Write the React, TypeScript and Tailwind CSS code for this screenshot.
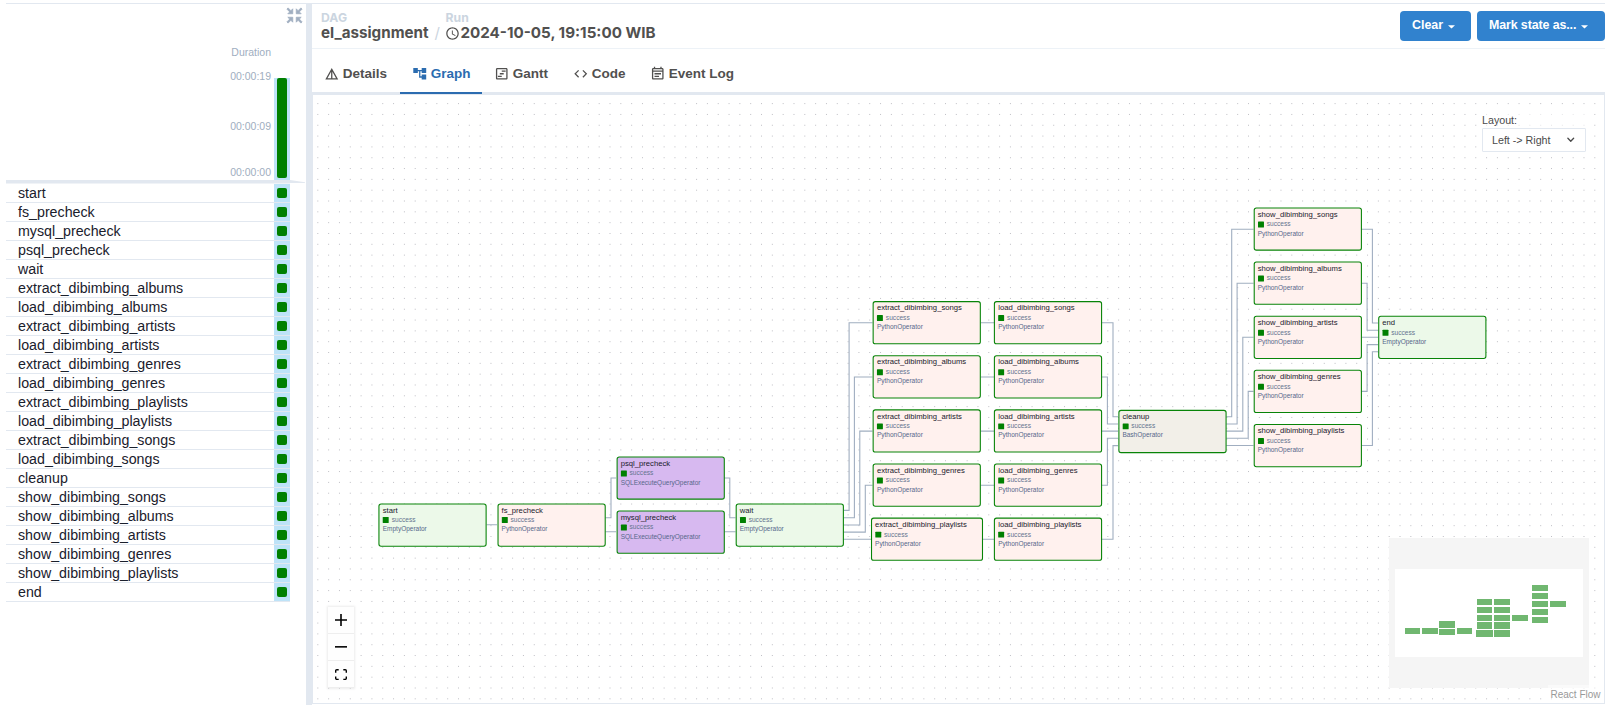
import React from "react";
import {
  MdDetails,
  MdAccountTree,
  MdOutlineViewTimeline,
  MdCode,
  MdOutlineEventNote,
  MdOutlineSchedule,
} from "react-icons/md";
import { BiCollapse } from "react-icons/bi";
import { FiChevronDown } from "react-icons/fi";

const tasks = [
  "start",
  "fs_precheck",
  "mysql_precheck",
  "psql_precheck",
  "wait",
  "extract_dibimbing_albums",
  "load_dibimbing_albums",
  "extract_dibimbing_artists",
  "load_dibimbing_artists",
  "extract_dibimbing_genres",
  "load_dibimbing_genres",
  "extract_dibimbing_playlists",
  "load_dibimbing_playlists",
  "extract_dibimbing_songs",
  "load_dibimbing_songs",
  "cleanup",
  "show_dibimbing_songs",
  "show_dibimbing_albums",
  "show_dibimbing_artists",
  "show_dibimbing_genres",
  "show_dibimbing_playlists",
  "end",
];

type TaskNode = { id: string; op: string; x: number; y: number; w?: number };

const kinds = ["songs", "albums", "artists", "genres", "playlists"];

// Positions are in flow units; the layer that holds them is scaled.
const nodes: TaskNode[] = [
  { id: "start", op: "EmptyOperator", x: 0, y: 546.5 },
  { id: "fs_precheck", op: "PythonOperator", x: 219.5, y: 546.5 },
  { id: "psql_precheck", op: "SQLExecuteQueryOperator", x: 439.5, y: 460 },
  { id: "mysql_precheck", op: "SQLExecuteQueryOperator", x: 439.5, y: 560 },
  { id: "wait", op: "EmptyOperator", x: 659.5, y: 546.5 },
  ...kinds.map((k, i) => ({
    id: `extract_dibimbing_${k}`,
    op: "PythonOperator",
    x: k === "playlists" ? 909.5 : 913,
    y: 173 + i * 100,
    w: k === "playlists" ? 207 : 200,
  })),
  ...kinds.map((k, i) => ({ id: `load_dibimbing_${k}`, op: "PythonOperator", x: 1137, y: 173 + i * 100 })),
  { id: "cleanup", op: "BashOperator", x: 1366.5, y: 373.5 },
  ...kinds.map((k, i) => ({ id: `show_dibimbing_${k}`, op: "PythonOperator", x: 1616.5, y: i * 100 })),
  { id: "end", op: "EmptyOperator", x: 1846.5, y: 200 },
];

const opColor: Record<string, string> = {
  EmptyOperator: "bg-[#ecf9e9]",
  PythonOperator: "bg-[#fff1ee]",
  SQLExecuteQueryOperator: "bg-[#d7b9f0]",
  BashOperator: "bg-[#f2efe8]",
};

const edges = [
  "M486.6 524.7H497",
  "M605.3 517.7H611V478H616",
  "M605.3 531.8H616",
  "M724.5 478H729.8V517.7H735.5",
  "M724.5 531.8H735.5",
  "M843.7 510.4H849.1V322.7H872.5",
  "M843.7 517.7H854.4V377H872.5",
  "M843.7 525H859.8V431.1H872.5",
  "M843.7 532.1H865.3V485.2H872.5",
  "M843.7 539.3H871",
  "M980.7 322.7H994",
  "M980.7 377H994",
  "M980.7 431.1H994",
  "M980.7 485.2H994",
  "M982.7 539.3H994",
  "M1102 322.7H1113V416.7H1118",
  "M1102 377H1107.4V424H1118",
  "M1102 431.1H1118",
  "M1102 485.2H1107.4V438.3H1118",
  "M1102 539.3H1113V445.6H1118",
  "M1226.3 416.7H1231.7V229.2H1253.5",
  "M1226.3 424H1237.1V283.3H1253.5",
  "M1226.3 431.1H1242.8V337.3H1253.5",
  "M1226.3 438.3H1248.2V391.4H1253.5",
  "M1226.3 445.5H1253.5",
  "M1361.7 229.2H1372.4V323H1378",
  "M1361.7 283.3H1367.1V330.2H1378",
  "M1361.7 337.3H1378",
  "M1361.7 391.4H1367.1V344.6H1378",
  "M1361.7 445.5H1372.4V351.8H1378",
];

const miniNodes = [
  [16, 90, 15, 6],
  [33, 90, 16, 6],
  [50, 83, 16, 7],
  [50, 91, 16, 6],
  [68, 90, 15, 6],
  [88, 61, 15, 6],
  [88, 69, 15, 6],
  [88, 77, 15, 6],
  [88, 84, 15, 7],
  [87, 92, 17, 7],
  [105, 61, 16, 6],
  [105, 69, 16, 6],
  [105, 77, 16, 6],
  [105, 84, 16, 7],
  [105, 92, 16, 7],
  [123, 77, 16, 6],
  [143, 47, 16, 6],
  [143, 55, 16, 6],
  [143, 63, 16, 6],
  [143, 71, 16, 6],
  [143, 79, 16, 6],
  [161, 63, 16, 6],
];

function GridPanel() {
  return (
    <aside className="w-[300px] shrink-0 bg-white">
      <div className="relative flex h-[176px] w-[284px] justify-end">
        <BiCollapse
          className="absolute -right-[15px] top-[1px] size-[21px] text-[#a0aec0]"
          stroke="currentColor"
          strokeWidth={0.9}
        />
        <div className="flex w-[60px] flex-col items-end pr-[3px] pt-[42px] text-[10.5px] leading-[13px] text-[#a0aec0]">
          <span>Duration</span>
          <span className="mt-[11px]">00:00:19</span>
          <span className="mt-[37px]">00:00:09</span>
          <span className="mt-[33px]">00:00:00</span>
        </div>
        <div className="mt-[74px] flex h-[102px] w-4 flex-col items-center bg-[#bee3f8]">
          <div className="h-[100px] w-[10px] rounded-[2px] bg-[#008000]" />
        </div>
      </div>
      <svg className="block" width="300" height="4" viewBox="0 0 300 4">
        <path d="M0 0H284L299 2.2V3H284V3.5H0Z" fill="#e2e8f0" />
      </svg>
      <ul className="w-[284px]">
        {tasks.map((t) => (
          <li key={t} className="flex h-[19px] border-b border-[#e2e8f0]">
            <span className="flex-1 pl-3 text-[14.22px] leading-[18px] text-[#1a202c]">{t}</span>
            <span className="flex w-4 items-center justify-center bg-[#bee3f8]">
              <span className="size-[10px] rounded-[2px] bg-[#008000]" />
            </span>
          </li>
        ))}
      </ul>
    </aside>
  );
}

function Caret() {
  return (
    <svg width="7" height="4" viewBox="0 0 7 4" className="mt-[3px]">
      <path d="M0 0.3H7L3.5 3.5Z" fill="#fff" />
    </svg>
  );
}

function Header() {
  return (
    <header className="flex h-[45px] justify-between border-b border-[#edf2f7]">
      <div className="flex pl-[9px] pt-[6px] font-['Inter',sans-serif] font-bold text-[#51504f]">
        <div>
          <div className="text-[12.2px] leading-[15px] text-[#cbd5e0]">DAG</div>
          <div className="text-[15.2px] leading-[16px]">el_assignment</div>
        </div>
        <div className="w-[17px] pt-[15px] text-center text-[15px] font-normal leading-4 text-[#cbd5e0]">/</div>
        <div>
          <div className="text-[12.2px] leading-[15px] text-[#cbd5e0]">Run</div>
          <div className="flex items-center text-[15.2px] leading-[16px]">
            <MdOutlineSchedule className="-ml-px mr-[0.8px] mt-px size-[15px]" />
            2024-10-05, 19:15:00 WIB
          </div>
        </div>
      </div>
      <div className="mt-[7px] flex h-[30px] gap-[6px] text-[12.4px] font-bold text-white">
        <button className="flex w-[71px] items-center gap-[4.5px] rounded-[4px] bg-[#3182ce] pb-[2px] pl-3">
          Clear <Caret />
        </button>
        <button className="flex w-[128px] items-center gap-[5px] rounded-[4px] bg-[#3182ce] pb-[2px] pl-3 tracking-[-0.1px]">
          Mark state as... <Caret />
        </button>
      </div>
    </header>
  );
}

const tabs = [
  { label: "Details", Icon: MdDetails, cls: "w-[88px] text-[#51504f] border-[#e2e8f0]" },
  { label: "Graph", Icon: MdAccountTree, cls: "w-[82px] text-[#2b6cb0] border-[#2b6cb0]" },
  { label: "Gantt", Icon: MdOutlineViewTimeline, cls: "w-[79px] text-[#51504f] border-[#e2e8f0]" },
  { label: "Code", Icon: MdCode, cls: "w-[77px] text-[#51504f] border-[#e2e8f0]" },
  { label: "Event Log", Icon: MdOutlineEventNote, cls: "w-[108px] text-[#51504f] border-[#e2e8f0]" },
];

function Tabs() {
  return (
    <nav className="flex h-[46px] border-b border-[#e2e8f0]">
      {tabs.map(({ label, Icon, cls }) => (
        <div
          key={label}
          className={`flex h-[45px] items-center gap-[3.8px] border-b-2 pl-[11.5px] pt-[7px] text-[13.5px] font-bold ${cls}`}
        >
          <Icon className="size-[15.5px] shrink-0" />
          <span className="whitespace-nowrap">{label}</span>
        </div>
      ))}
      <div className="h-[45px] flex-1 border-b-2 border-[#e2e8f0]" />
    </nav>
  );
}

function Node({ node }: { node: TaskNode }) {
  return (
    <div
      className={`absolute h-[80px] rounded-[5px] border-2 border-[#088408] px-[6px] ${opColor[node.op]}`}
      style={{ left: node.x, top: node.y, width: node.w ?? 200 }}
    >
      <div className="whitespace-nowrap text-[14.2px] leading-[20px] text-[#1a202c]">{node.id}</div>
      <div className="mt-[1.5px] flex items-center text-[12.2px] leading-[15px] text-[#64748f]">
        <span className="mr-[5.5px] size-[11px] rounded-[1px] bg-[#008000]" />
        success
      </div>
      <div className="whitespace-nowrap text-[12px] leading-[18px] text-[#56678a]">{node.op}</div>
    </div>
  );
}

function Graph() {
  return (
    <section className="relative h-[609px] overflow-hidden border-x border-b border-[#e2e8f0]">
      <svg className="absolute inset-0" width="1291" height="608" viewBox="313 95 1291 608">
        <defs>
          <pattern id="dots" x="312.4" y="98.2" width="10.822" height="10.822" patternUnits="userSpaceOnUse">
            <circle cx="5.41" cy="5.41" r="0.54" fill="#b0b0b8" />
          </pattern>
        </defs>
        <rect x="313" y="95" width="1291" height="608" fill="url(#dots)" />
        <path d={edges.join("")} fill="none" stroke="#a0aec0" strokeWidth="1.1" />
      </svg>
      <div className="absolute left-[65px] top-[112px] origin-top-left translate-x-[0.4px] translate-y-[0.4px] scale-[0.5413]">
        {nodes.map((n) => (
          <Node key={n.id} node={n} />
        ))}
      </div>

      <div className="absolute right-[15px] top-[17px] w-[110px] bg-white/60 pl-[3px] text-[10.7px] text-[#4a4a4a]">
        <div className="leading-4">Layout:</div>
        <div className="flex h-6 w-[104px] items-center justify-between rounded-[1px] border border-[#e2e8f0] bg-white pl-[9px] pr-[9px]">
          Left -&gt; Right
          <FiChevronDown className="size-[11.5px]" strokeWidth={2.8} />
        </div>
      </div>

      <div className="absolute bottom-[15px] left-[15px] flex flex-col shadow-[0_0_2px_1px_rgba(0,0,0,0.08)]">
        <button className="flex h-[27px] w-[26px] items-center justify-center border-b border-[#eee] bg-[#fefefe]">
          <svg width="12" height="12" viewBox="0 0 32 32">
            <path d="M32 18.133H18.133V32h-4.266V18.133H0v-4.266h13.867V0h4.266v13.867H32z" />
          </svg>
        </button>
        <button className="flex h-[27px] w-[26px] items-center justify-center border-b border-[#eee] bg-[#fefefe]">
          <svg width="12" height="2" viewBox="0 0 32 5">
            <path d="M0 0h32v4.2H0z" />
          </svg>
        </button>
        <button className="flex h-[27px] w-[26px] items-center justify-center border-b border-[#eee] bg-[#fefefe] pt-px">
          <svg width="12" height="11.25" viewBox="0 0 32 30">
            <path d="M3.692 4.63c0-.53.4-.938.939-.938h5.215V0H4.708C2.13 0 0 2.054 0 4.63v5.216h3.692V4.631zM27.354 0h-5.2v3.692h5.17c.53 0 .984.4.984.939v5.215H32V4.631A4.624 4.624 0 0027.354 0zm.954 24.83c0 .532-.4.94-.939.94h-5.215v3.768h5.215c2.577 0 4.631-2.13 4.631-4.707v-5.139h-3.692v5.139zm-23.677.94c-.531 0-.939-.4-.939-.94v-5.138H0v5.139c0 2.577 2.13 4.707 4.708 4.707h5.138V25.77H4.631z" />
          </svg>
        </button>
      </div>

      <svg className="absolute bottom-[15px] right-[15px]" width="200" height="150" viewBox="0 0 200 150">
        <rect width="200" height="150" fill="#f5f5f5" />
        <rect x="6" y="31" width="188" height="88" fill="#fff" />
        {miniNodes.map(([x, y, w, h]) => (
          <rect key={`${x}-${y}`} x={x} y={y} width={w} height={h} fill="#70b770" />
        ))}
      </svg>
      <div className="absolute bottom-0 right-0 h-[18px] w-[56px] bg-white/50 pl-[2.5px] text-[10px] leading-[19px] text-[#999]">
        React Flow
      </div>
    </section>
  );
}

export default function App() {
  return (
    <div className="h-[705px] w-[1605px] overflow-hidden bg-white pl-[6px] pt-[3px] font-['Liberation_Sans',Arial,sans-serif]">
      <div className="flex h-[702px] border-t border-[#e2e8f0]">
        <GridPanel />
        <div className="w-[6px] shrink-0 bg-[#e2e8f0]" />
        <main className="min-w-0 flex-1">
          <Header />
          <Tabs />
          <Graph />
        </main>
      </div>
    </div>
  );
}
